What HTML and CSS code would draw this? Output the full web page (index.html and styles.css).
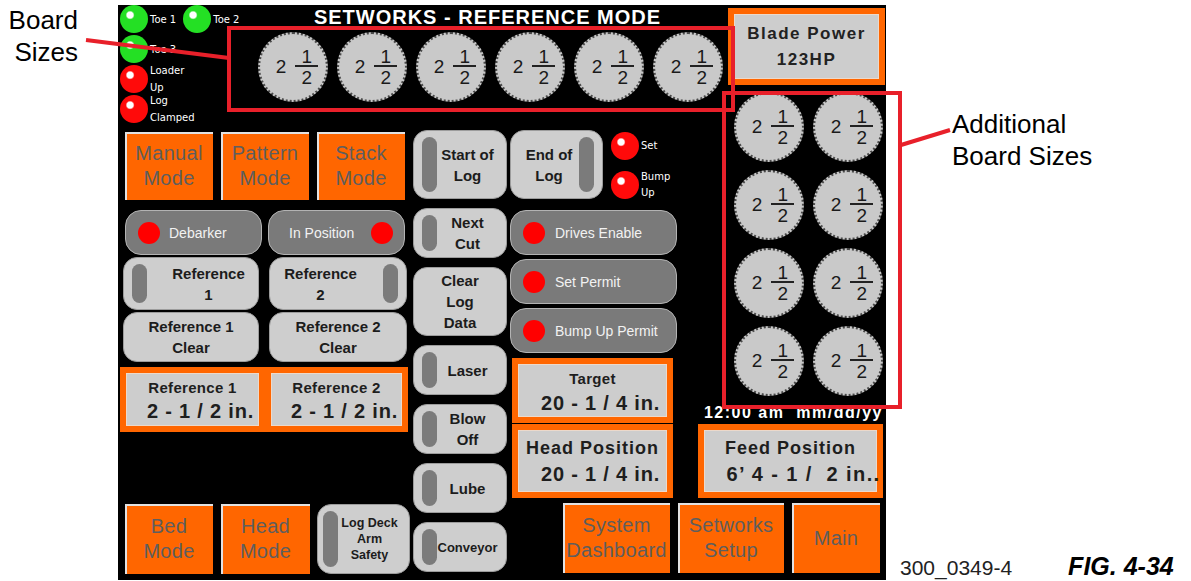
FILE: index.html
```html
<!DOCTYPE html>
<html lang="en-US"><head>
<meta charset="utf-8">
<meta name="viewport" content="width=device-width, initial-scale=1.0">
<link rel="stylesheet" href="styles.css">
<title>Setworks - Reference Mode</title>
</head><body>
<div class="figure">

<div class="note-left">
	<p class="callout">Board<br>Sizes</p>
</div>

<div class="screen">

	<div class="lamps">
		<div class="lamp-row">
			<div class="lamp-item"><span class="lamp green"></span><span class="lamp-label">Toe 1</span></div>
			<div class="lamp-item"><span class="lamp green"></span><span class="lamp-label">Toe 2</span></div>
		</div>
		<div class="lamp-row">
			<div class="lamp-item"><span class="lamp green"></span><span class="lamp-label">Toe 3</span></div>
		</div>
		<div class="lamp-row">
			<div class="lamp-item"><span class="lamp red"></span><span class="lamp-label">Loader<br>Up</span></div>
		</div>
		<div class="lamp-row">
			<div class="lamp-item"><span class="lamp red"></span><span class="lamp-label">Log<br>Clamped</span></div>
		</div>
	</div>

	<div class="head">
		<h1 class="title">SETWORKS - REFERENCE MODE</h1>
		<div class="sizes">
			<div class="size"><span>2</span><span class="frac"><span class="num">1</span><span class="den">2</span></span></div>
			<div class="size"><span>2</span><span class="frac"><span class="num">1</span><span class="den">2</span></span></div>
			<div class="size"><span>2</span><span class="frac"><span class="num">1</span><span class="den">2</span></span></div>
			<div class="size"><span>2</span><span class="frac"><span class="num">1</span><span class="den">2</span></span></div>
			<div class="size"><span>2</span><span class="frac"><span class="num">1</span><span class="den">2</span></span></div>
			<div class="size"><span>2</span><span class="frac"><span class="num">1</span><span class="den">2</span></span></div>
		</div>
	</div>

	<div class="blade">
		<span>Blade Power</span>
		<span>123HP</span>
	</div>

	<div class="circ">
		<div class="size-grid">
			<div class="size"><span>2</span><span class="frac"><span class="num">1</span><span class="den">2</span></span></div>
			<div class="size"><span>2</span><span class="frac"><span class="num">1</span><span class="den">2</span></span></div>
			<div class="size"><span>2</span><span class="frac"><span class="num">1</span><span class="den">2</span></span></div>
			<div class="size"><span>2</span><span class="frac"><span class="num">1</span><span class="den">2</span></span></div>
			<div class="size"><span>2</span><span class="frac"><span class="num">1</span><span class="den">2</span></span></div>
			<div class="size"><span>2</span><span class="frac"><span class="num">1</span><span class="den">2</span></span></div>
			<div class="size"><span>2</span><span class="frac"><span class="num">1</span><span class="den">2</span></span></div>
			<div class="size"><span>2</span><span class="frac"><span class="num">1</span><span class="den">2</span></span></div>
		</div>
		<div class="clock">12:00 am  mm/dd/yy</div>
	</div>

	<div class="left">
		<div class="modes">
			<div class="mode">Manual<br>Mode</div>
			<div class="mode">Pattern<br>Mode</div>
			<div class="mode">Stack<br>Mode</div>
		</div>
		<div class="pills">
			<div class="pill"><span class="dot"></span>Debarker</div>
			<div class="pill pill-end">In Position<span class="dot"></span></div>
		</div>
		<div class="refs">
			<div class="key"><span class="slot"></span><span class="text">Reference<br>1</span></div>
			<div class="key"><span class="text">Reference<br>2</span><span class="slot"></span></div>
		</div>
		<div class="refs clears">
			<div class="key"><span class="text">Reference 1<br>Clear</span></div>
			<div class="key"><span class="text">Reference 2<br>Clear</span></div>
		</div>
		<div class="ref-values">
			<div class="readout"><span class="name">Reference 1</span><span class="value">2 - 1 / 2 in.</span></div>
			<div class="readout"><span class="name">Reference 2</span><span class="value">2 - 1 / 2 in.</span></div>
		</div>
		<div class="modes low">
			<div class="mode">Bed<br>Mode</div>
			<div class="mode">Head<br>Mode</div>
			<div class="key safety"><span class="slot"></span><span class="text">Log Deck<br>Arm<br>Safety</span></div>
		</div>
	</div>

	<div class="mid">
		<div class="key tall"><span class="slot"></span><span class="text">Start of<br>Log</span></div>
		<div class="key"><span class="slot"></span><span class="text">Next<br>Cut</span></div>
		<div class="key tall"><span class="text">Clear<br>Log<br>Data</span></div>
		<div class="key"><span class="slot"></span><span class="text">Laser</span></div>
		<div class="key"><span class="slot"></span><span class="text">Blow<br>Off</span></div>
		<div class="key"><span class="slot"></span><span class="text">Lube</span></div>
		<div class="key"><span class="slot"></span><span class="text small">Conveyor</span></div>
	</div>

	<div class="right">
		<div class="log-row">
			<div class="key tall"><span class="text">End of<br>Log</span><span class="slot"></span></div>
			<div class="signals">
				<div class="lamp-item"><span class="lamp red"></span><span class="lamp-label">Set</span></div>
				<div class="lamp-item"><span class="lamp red"></span><span class="lamp-label">Bump<br>Up</span></div>
			</div>
		</div>
		<div class="pill wide"><span class="dot"></span>Drives Enable</div>
		<div class="pill wide"><span class="dot"></span>Set Permit</div>
		<div class="pill wide"><span class="dot"></span>Bump Up Permit</div>
		<div class="readout target"><span class="name">Target</span><span class="value">20 - 1 / 4 in.</span></div>
	</div>

	<div class="bottom">
		<div class="positions">
			<div class="readout large head-pos"><span class="name">Head Position</span><span class="value">20 - 1 / 4 in.</span></div>
			<div class="readout large feed-pos"><span class="name">Feed Position</span><span class="value">6’ 4 - 1 /  2 in..</span></div>
		</div>
		<div class="navs">
			<div class="mode dash">System<br>Dashboard</div>
			<div class="mode setup">Setworks<br>Setup</div>
			<div class="mode main">Main</div>
		</div>
	</div>

</div>

<div class="note-right">
	<p class="callout">Additional<br>Board Sizes</p>
	<div class="caption">
		<span>300_0349-4</span>
		<span class="fig">FIG. 4-34</span>
	</div>
</div>

<svg class="marks" width="1191" height="581" viewBox="0 0 1191 581">
	<line x1="86" y1="40" x2="229" y2="58" stroke="#e8202a" stroke-width="4"/>
	<rect x="229" y="28" width="504" height="82" fill="none" stroke="#e8202a" stroke-width="4"/>
	<rect x="724" y="93" width="176" height="314" fill="none" stroke="#e8202a" stroke-width="4"/>
	<line x1="901" y1="145" x2="950" y2="130" stroke="#e8202a" stroke-width="4"/>
</svg>

</div>
</body></html>
```

FILE: styles.css
```css
body {
	margin : 0 ;
	background : #fff ;
	font-family : "Liberation Sans", Arial, sans-serif ;
	}
.figure {
	position : relative ;
	display : flex ;
	width : 1191px ;
	height : 581px ;
	overflow : hidden ;
	}
.callout {
	margin : 0 ;
	font-size : 26px ;
	line-height : 32px ;
	color : #000 ;
	}
.note-left {
	width : 118px ;
	flex-shrink : 0 ;
	box-sizing : border-box ;
	padding : 4px 40px 0 0 ;
	text-align : right ;
	}
.note-right {
	flex : 1 ;
	display : flex ;
	flex-direction : column ;
	}
.note-right .callout {
	margin : 108px 0 0 66px ;
	}
.caption {
	margin : auto 0 1px 14px ;
	display : flex ;
	align-items : baseline ;
	gap : 56px ;
	font-size : 21px ;
	line-height : 24px ;
	color : #222 ;
	}
.caption .fig {
	font-size : 25px ;
	font-weight : bold ;
	font-style : italic ;
	color : #000 ;
	}
.marks {
	position : absolute ;
	left : 0 ;
	top : 0 ;
	pointer-events : none ;
	}

/* the HMI screen */
.screen {
	width : 768px ;
	height : 575px ;
	margin-top : 5px ;
	flex-shrink : 0 ;
	background : #000 ;
	display : grid ;
	grid-template-columns : 140px 152px 100px 188px 188px ;
	grid-template-rows : 83px 39px 296px 1fr ;
	grid-template-areas :
		"lamps head head head blade"
		"lamps head head head circ"
		"left left mid right circ"
		"left left mid bottom bottom" ;
	}

/* lamps */
.lamps {
	grid-area : lamps ;
	display : flex ;
	flex-direction : column ;
	gap : 2px ;
	padding-left : 2px ;
	}
.lamp-row {
	display : flex ;
	align-items : center ;
	gap : 7px ;
	height : 28px ;
	}
.lamp-item {
	display : flex ;
	align-items : center ;
	gap : 2px ;
	}
.lamp {
	width : 28px ;
	height : 28px ;
	border-radius : 50% ;
	flex-shrink : 0 ;
	}
.lamp.green { background : radial-gradient( circle at 36% 36%, #fff 0 3px, #24e024 4.5px ) ; }
.lamp.red { background : radial-gradient( circle at 36% 36%, #fff 0 3px, #ff0a0a 4.5px ) ; }
.lamp-label {
	font-family : "DejaVu Sans", sans-serif ;
	font-size : 10px ;
	line-height : 17px ;
	color : #fff ;
	white-space : nowrap ;
	}

/* title and board sizes */
.head {
	grid-area : head ;
	display : flex ;
	flex-direction : column ;
	align-items : flex-start ;
	}
.title {
	margin : 0 ;
	width : 465px ;
	box-sizing : border-box ;
	padding : 1px 6px 0 0 ;
	text-align : center ;
	font-size : 20px ;
	line-height : 22px ;
	letter-spacing : 1px ;
	font-weight : bold ;
	color : #fff ;
	white-space : nowrap ;
	}
.sizes {
	display : flex ;
	gap : 9px ;
	margin-top : 4px ;
	}
.size {
	width : 70px ;
	height : 70px ;
	flex-shrink : 0 ;
	box-sizing : border-box ;
	border-radius : 50% ;
	border : 2px dotted #4a4a4a ;
	background : #c9c9c9 ;
	display : flex ;
	align-items : center ;
	justify-content : center ;
	gap : 9px ;
	padding-left : 8px ;
	font-size : 19px ;
	line-height : 16px ;
	color : #1a1a1a ;
	}
.frac {
	display : flex ;
	flex-direction : column ;
	width : 23px ;
	text-align : center ;
	}
.frac .num { border-bottom : 2px solid #222 ; }
.frac .den { padding-top : 3px ; }

/* right column */
.blade {
	grid-area : blade ;
	justify-self : end ;
	align-self : start ;
	margin : 3px 1px 0 0 ;
	width : 157px ;
	height : 77px ;
	box-sizing : border-box ;
	border : 6px solid #ff6600 ;
	background : #cdcdcd ;
	box-shadow : inset 0 0 0 1px #ecd9cb ;
	display : flex ;
	flex-direction : column ;
	justify-content : center ;
	align-items : center ;
	font-size : 17px ;
	line-height : 26px ;
	letter-spacing : 1.5px ;
	font-weight : bold ;
	color : #222 ;
	}
.circ {
	grid-area : circ ;
	display : flex ;
	flex-direction : column ;
	align-items : flex-end ;
	padding : 4px 3px 0 0 ;
	}
.size-grid {
	display : grid ;
	grid-template-columns : 70px 70px ;
	column-gap : 9px ;
	row-gap : 8px ;
	}
.clock {
	margin-top : 8px ;
	font-size : 16px ;
	line-height : 18px ;
	letter-spacing : 1.5px ;
	font-weight : bold ;
	color : #fff ;
	white-space : pre ;
	}

/* orange buttons */
.mode {
	width : 88px ;
	height : 68px ;
	flex-shrink : 0 ;
	box-sizing : border-box ;
	background : #ff6600 ;
	box-shadow : inset 2px 2px 0 #e2e2e2 ;
	display : flex ;
	align-items : center ;
	justify-content : center ;
	text-align : center ;
	font-size : 20px ;
	line-height : 25px ;
	letter-spacing : .3px ;
	color : #5e5e5e ;
	}

/* dark pill indicators */
.pill {
	height : 45px ;
	box-sizing : border-box ;
	background : #7a7a7a ;
	border : 1px solid #b3b3b3 ;
	border-radius : 16px ;
	display : flex ;
	align-items : center ;
	gap : 9px ;
	padding : 0 11px 0 12px ;
	font-size : 14px ;
	color : #f2f2f2 ;
	white-space : nowrap ;
	}
.pill-end {
	justify-content : space-between ;
	padding-left : 20px ;
	}
.dot {
	width : 22px ;
	height : 22px ;
	border-radius : 50% ;
	background : #ff0000 ;
	flex-shrink : 0 ;
	}

/* light grey keys */
.key {
	height : 50px ;
	box-sizing : border-box ;
	background : #cecece ;
	border : 1px solid #9c9c9c ;
	border-radius : 14px ;
	display : flex ;
	padding : 6px 8px ;
	font-size : 15px ;
	line-height : 21px ;
	font-weight : bold ;
	color : #1c1c1c ;
	}
.key.tall { height : 69px ; }
.key .slot {
	width : 15px ;
	flex-shrink : 0 ;
	background : #7b7b7b ;
	border-radius : 8px ;
	}
.key .text {
	flex : 1 ;
	display : flex ;
	align-items : center ;
	justify-content : center ;
	text-align : center ;
	}
.key .text.small { font-size : 13px ; }

/* orange framed readouts */
.readout {
	box-sizing : border-box ;
	border : 6px solid #ff6600 ;
	background : #cdcdcd ;
	box-shadow : inset 0 0 0 1px #ecd9cb ;
	display : flex ;
	flex-direction : column ;
	justify-content : center ;
	align-items : center ;
	font-weight : bold ;
	color : #1e1e1e ;
	white-space : pre ;
	}
.readout .name {
	font-size : 15px ;
	line-height : 22px ;
	letter-spacing : .3px ;
	}
.readout .value {
	font-size : 20px ;
	line-height : 24px ;
	letter-spacing : .8px ;
	padding-left : 16px ;
	}
.readout.large .name {
	font-size : 18px ;
	line-height : 26px ;
	letter-spacing : 1px ;
	}
.readout.large .value { line-height : 26px ; }
.feed-pos .value { letter-spacing : 1.4px ; padding-left : 26px ; }

/* left block */
.left {
	grid-area : left ;
	display : flex ;
	flex-direction : column ;
	padding : 5px 0 6px 5px ;
	}
.modes {
	display : flex ;
	gap : 8px ;
	padding-left : 2px ;
	}
.pills {
	display : flex ;
	gap : 6px ;
	margin-top : 10px ;
	padding-left : 2px ;
	}
.pills .pill { width : 137px ; }
.refs {
	display : flex ;
	gap : 10px ;
	margin-top : 2px ;
	}
.refs .key { width : 136px ; height : 53px ; gap : 20px ; }
.refs .key + .key { width : 138px ; }
.refs.clears .key { height : 50px ; }
.ref-values {
	display : flex ;
	margin : 5px 0 0 -3px ;
	}
.ref-values .readout { width : 145px ; height : 65px ; }
.ref-values .readout + .readout { width : 143px ; }
.modes.low {
	margin-top : auto ;
	height : 70px ;
	gap : 8px ;
	}
.modes.low .mode { height : 70px ; }
.modes.low .mode + .mode { width : 89px ; }
.key.safety {
	width : 95px ;
	height : 70px ;
	margin-left : -1px ;
	padding-left : 5px ;
	font-size : 12.5px ;
	line-height : 16px ;
	}

/* middle column */
.mid {
	grid-area : mid ;
	display : flex ;
	flex-direction : column ;
	gap : 9px ;
	padding : 3px 0 0 3px ;
	}
.mid .key { width : 94px ; }

/* right block */
.right {
	grid-area : right ;
	display : flex ;
	flex-direction : column ;
	align-items : flex-start ;
	gap : 4px ;
	padding-top : 3px ;
	}
.log-row {
	display : flex ;
	align-items : flex-start ;
	gap : 8px ;
	height : 69px ;
	margin-bottom : 7px ;
	}
.log-row .key { width : 93px ; }
.signals {
	display : flex ;
	flex-direction : column ;
	gap : 9px ;
	padding-top : 2px ;
	}
.signals .lamp-label { line-height : 16px ; }
.pill.wide { width : 167px ; gap : 10px ; }
.readout.target {
	width : 161px ;
	height : 65px ;
	margin : 1px 0 0 2px ;
	}
.readout.target .name { line-height : 24px ; }

/* bottom block */
.bottom {
	grid-area : bottom ;
	display : flex ;
	flex-direction : column ;
	padding-top : 1px ;
	}
.positions {
	display : flex ;
	gap : 25px ;
	padding-left : 2px ;
	}
.head-pos { width : 161px ; height : 74px ; }
.feed-pos { width : 185px ; height : 74px ; }
.navs {
	display : flex ;
	justify-content : flex-end ;
	gap : 8px ;
	margin-top : 5px ;
	padding-right : 6px ;
	}
.navs .mode { height : 70px ; }
.mode.dash { width : 107px ; }
.mode.setup { width : 106px ; }
```
